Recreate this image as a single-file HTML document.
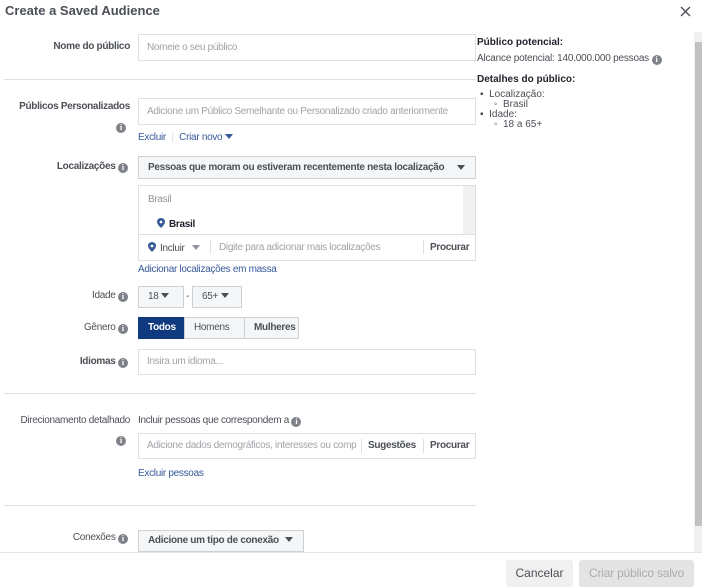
<!DOCTYPE html><html><head><meta charset="utf-8"><style>
*{box-sizing:border-box;margin:0;padding:0}
body{width:702px;height:587px;overflow:hidden;background:#fff;font-family:"Liberation Sans",sans-serif;font-size:10px;letter-spacing:-0.3px;color:#4b4f56;position:relative}
.a{position:absolute;white-space:nowrap}
.lbl{position:absolute;right:572px;white-space:nowrap;color:#4b4f56;text-align:right}
.inp{position:absolute;left:138px;width:338px;border:1px solid #dddfe2;background:#fff;color:#a0a3a8;padding-left:8px}
.hr{position:absolute;left:4px;width:472px;height:1px;background:#dddfe2}
.i{display:inline-block;width:10px;height:10px;border-radius:50%;background:#7f8389;color:#fff;font-size:8px;font-weight:bold;text-align:center;line-height:10px;vertical-align:-1px;font-family:"Liberation Serif",serif;letter-spacing:0}
.btn{position:absolute;border:1px solid #ced0d4;background:#f5f6f7;color:#4b4f56;font-weight:bold;padding-left:9px}
.tri{display:inline-block;width:0;height:0;border-left:4px solid transparent;border-right:4px solid transparent;border-top:5px solid #4b4f56;vertical-align:1px}
.link{color:#365899}
</style></head><body>
<div class="a" style="left:5px;top:3px;font-size:13px;letter-spacing:0;font-weight:bold;color:#4b4f56">Create a Saved Audience</div>
<svg class="a" style="left:680px;top:6px" width="11" height="11"><path d="M1 1L10 10M10 1L1 10" stroke="#4b4f56" stroke-width="1.4"/></svg>

<div class="lbl" style="top:41px;font-weight:bold">Nome do público</div>
<div class="inp" style="top:34px;height:27px;line-height:25px">Nomeie o seu público</div>
<div class="hr" style="top:79px"></div>

<div class="lbl" style="top:101px;font-weight:bold">Públicos Personalizados</div>
<div class="a" style="left:116px;top:121px"><span class="i">i</span></div>
<div class="inp" style="top:98px;height:27px;line-height:25px">Adicione um Público Semelhante ou Personalizado criado anteriormente</div>
<div class="a link" style="left:138px;top:132px">Excluir <span style="color:#dddfe2;margin:0 3px">|</span> Criar novo <span class="tri" style="border-top-color:#365899"></span></div>

<div class="lbl" style="top:161px;font-weight:bold;right:574px">Localizações <span class="i">i</span></div>
<div class="btn" style="left:138px;top:156px;width:338px;height:23px;line-height:21px">Pessoas que moram ou estiveram recentemente nesta localização<span class="tri" style="position:absolute;right:10px;top:8px"></span></div>
<div class="a" style="left:138px;top:185px;width:338px;height:76px;border:1px solid #dddfe2">
 <div class="a" style="left:9px;top:8px;color:#90949c">Brasil</div>
 <div class="a" style="left:18px;top:32px;font-weight:bold;color:#1d2129"><svg width="8" height="10" style="vertical-align:-1px;margin-right:4px"><path d="M4 0C1.8 0 0 1.6 0 3.8 0 6.5 4 10 4 10S8 6.5 8 3.8C8 1.6 6.2 0 4 0z" fill="#365899"/><circle cx="4" cy="4" r="1.4" fill="#fff"/></svg>Brasil</div>
 <div class="a" style="right:0;top:0;width:12px;height:48px;background:#f1f1f1"></div>
 <div class="a" style="left:0;top:48px;width:336px;height:1px;background:#dddfe2"></div>
 <div class="a" style="left:9px;top:56px;color:#4b4f56"><svg width="8" height="10" style="vertical-align:-1px;margin-right:4px"><path d="M4 0C1.8 0 0 1.6 0 3.8 0 6.5 4 10 4 10S8 6.5 8 3.8C8 1.6 6.2 0 4 0z" fill="#365899"/><circle cx="4" cy="4" r="1.4" fill="#fff"/></svg>Incluir &nbsp; <span class="tri" style="border-top-color:#90949c"></span></div>
 <div class="a" style="left:71px;top:54px;width:1px;height:14px;background:#dddfe2"></div>
 <div class="a" style="left:80px;top:56px;color:#a0a3a8">Digite para adicionar mais localizações</div>
 <div class="a" style="left:284px;top:54px;width:1px;height:14px;background:#dddfe2"></div>
 <div class="a" style="left:291px;top:56px;font-weight:bold">Procurar</div>
</div>
<div class="a link" style="left:138px;top:264px">Adicionar localizações em massa</div>

<div class="lbl" style="top:290px;right:574px">Idade <span class="i">i</span></div>
<div class="btn" style="left:138px;top:286px;width:46px;height:22px;line-height:20px;font-weight:normal">18 <span class="tri"></span></div>
<div class="a" style="left:186px;top:291px">-</div>
<div class="btn" style="left:192px;top:286px;width:50px;height:22px;line-height:20px;font-weight:normal">65+ <span class="tri"></span></div>

<div class="lbl" style="top:322px;right:574px">Gênero <span class="i">i</span></div>
<div class="btn" style="left:138px;top:317px;width:47px;height:22px;line-height:20px;background:#0f3a7f;border-color:#0f3a7f;color:#fff">Todos</div>
<div class="btn" style="left:184px;top:317px;width:61px;height:22px;line-height:20px;font-weight:normal">Homens</div>
<div class="btn" style="left:244px;top:317px;width:55px;height:22px;line-height:20px;font-weight:bold">Mulheres</div>

<div class="lbl" style="top:356px;right:574px;font-weight:bold">Idiomas <span class="i">i</span></div>
<div class="inp" style="top:349px;height:26px;line-height:24px">Insira um idioma...</div>
<div class="hr" style="top:393px"></div>

<div class="lbl" style="top:415px;right:572px">Direcionamento detalhado</div>
<div class="a" style="left:116px;top:434px"><span class="i">i</span></div>
<div class="a" style="left:138px;top:415px">Incluir pessoas que correspondem a <span class="i">i</span></div>
<div class="inp" style="top:433px;height:26px;line-height:24px">Adicione dados demográficos, interesses ou comp
 <span class="a" style="left:222px;top:5px;width:1px;height:14px;background:#dddfe2"></span>
 <span class="a" style="left:229px;top:0;color:#4b4f56;font-weight:bold">Sugestões</span>
 <span class="a" style="left:284px;top:5px;width:1px;height:14px;background:#dddfe2"></span>
 <span class="a" style="left:291px;top:0;color:#4b4f56;font-weight:bold">Procurar</span></div>
<div class="a link" style="left:138px;top:468px">Excluir pessoas</div>
<div class="hr" style="top:505px"></div>

<div class="lbl" style="top:532px;right:574px">Conexões <span class="i">i</span></div>
<div class="btn" style="left:138px;top:530px;width:166px;height:22px;line-height:20px">Adicione um tipo de conexão <span class="tri" style="margin-left:4px"></span></div>

<div class="a" style="left:477px;top:37px;font-weight:bold;color:#1d2129;letter-spacing:0">Público potencial:</div>
<div class="a" style="left:477px;top:53px;letter-spacing:-0.2px">Alcance potencial: 140.000.000 pessoas <span class="i">i</span></div>
<div class="a" style="left:477px;top:74px;font-weight:bold;color:#1d2129;letter-spacing:0">Detalhes do público:</div>
<div class="a" style="left:480px;top:90px;line-height:10px;letter-spacing:0">▪&nbsp; Localização:<br>&nbsp;&nbsp;&nbsp;&nbsp;&nbsp;◦&nbsp; Brasil<br>▪&nbsp; Idade:<br>&nbsp;&nbsp;&nbsp;&nbsp;&nbsp;◦&nbsp; 18 a 65+</div>

<div class="a" style="left:694px;top:32px;width:8px;height:520px;background:#f1f1f1"></div>
<div class="a" style="left:695px;top:42px;width:7px;height:484px;background:#c1c1c1"></div>

<div class="a" style="left:0;top:552px;width:702px;height:35px;background:#fff;border-top:1px solid #e5e5e5"></div>
<div class="a" style="left:506px;top:560px;width:67px;height:27px;background:#f0f0f0;border-radius:3px;text-align:center;line-height:27px;font-size:12px;letter-spacing:0;color:#4b4f56">Cancelar</div>
<div class="a" style="left:579px;top:560px;width:115px;height:27px;background:#e4e4e4;border-radius:3px;text-align:center;line-height:27px;font-size:12px;letter-spacing:-0.2px;color:#a8abaf">Criar público salvo</div>
</body></html>
